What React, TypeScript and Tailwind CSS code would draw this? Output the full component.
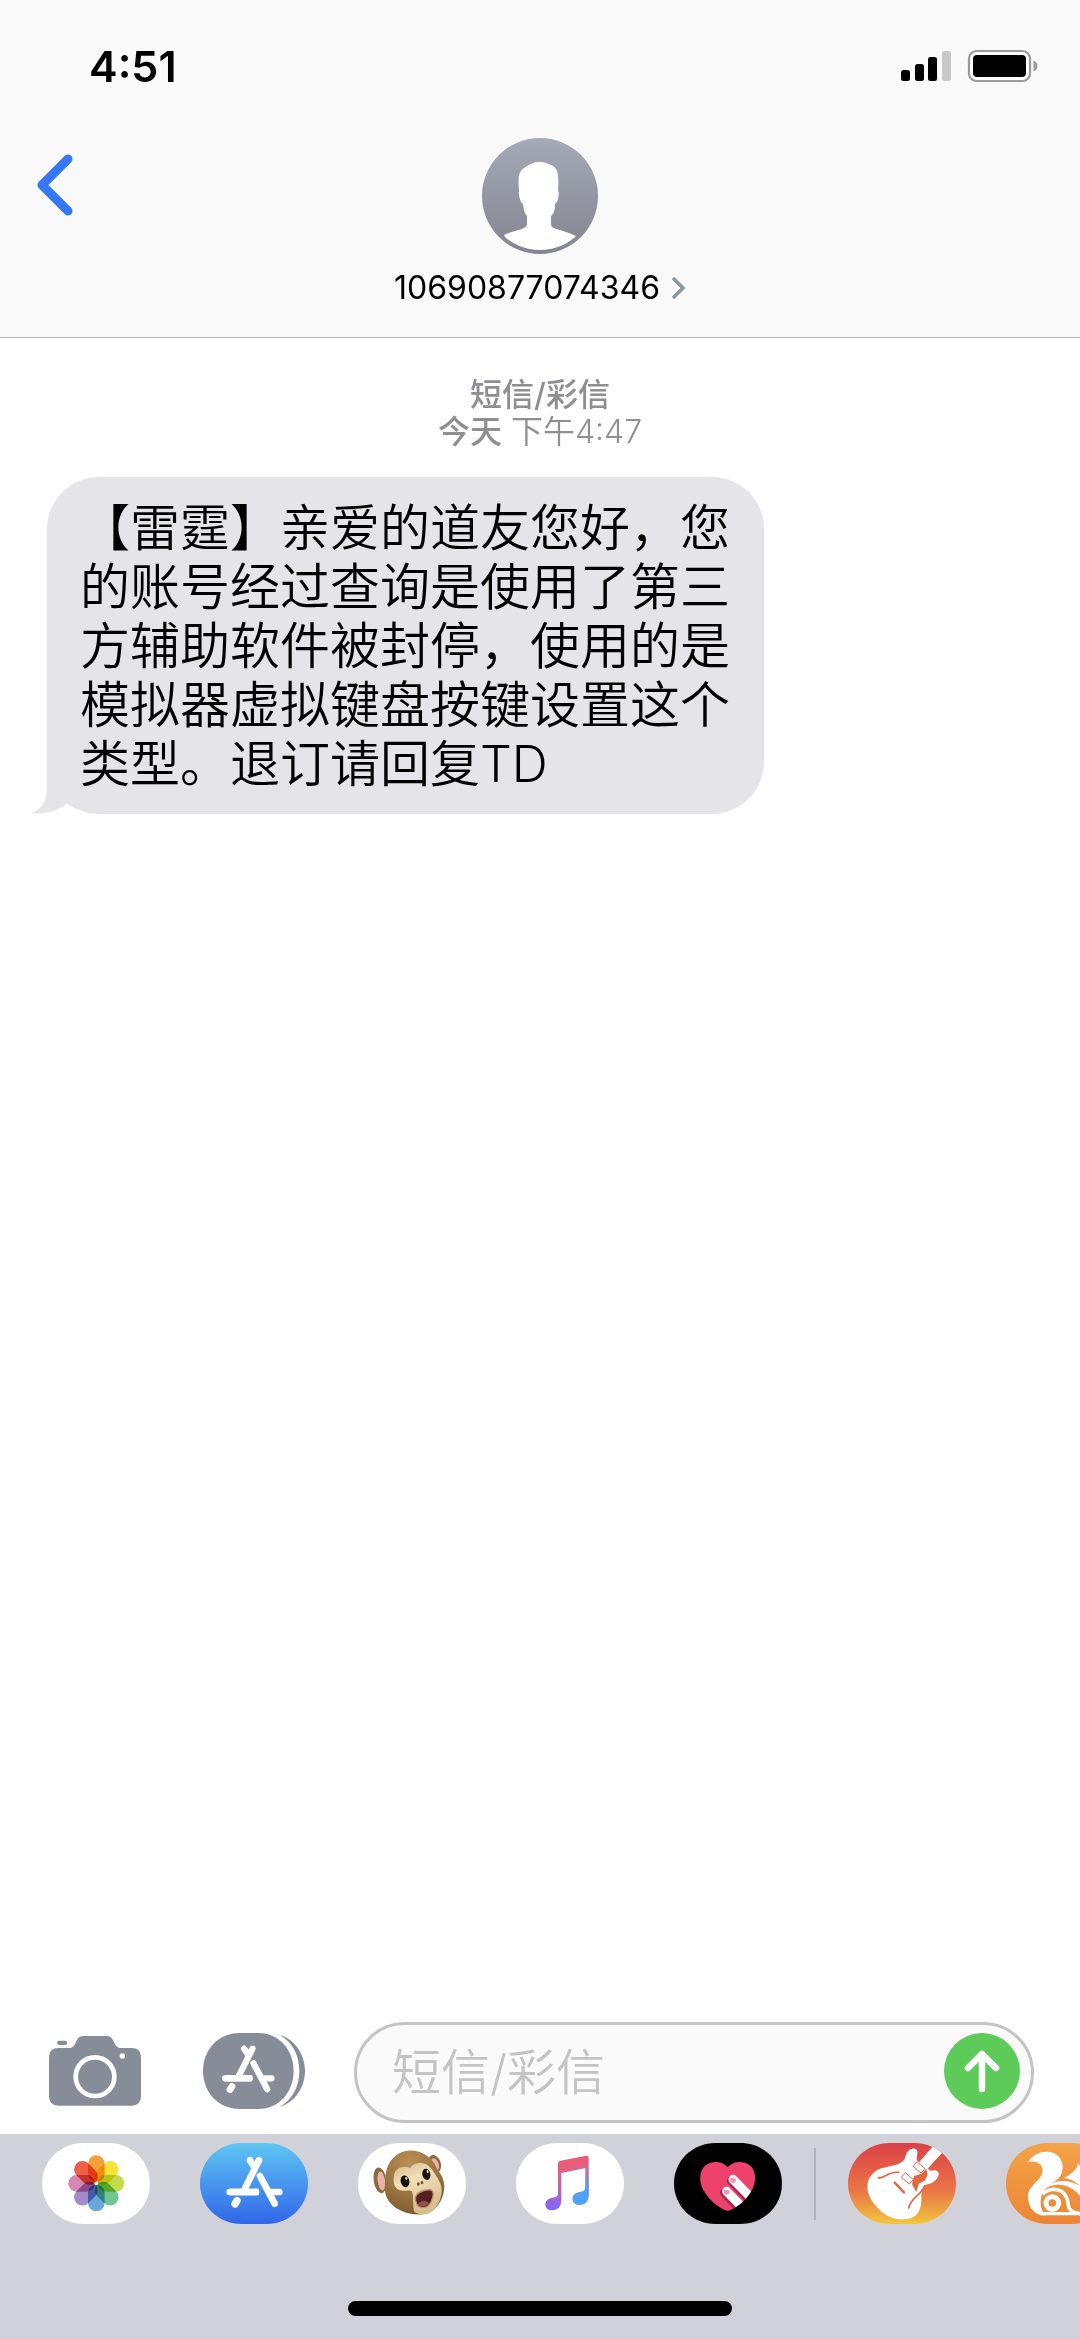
import type { ReactNode } from "react";

const MESSAGE =
  "【雷霆】亲爱的道友您好，您的账号经过查询是使用了第三方辅助软件被封停，使用的是模拟器虚拟键盘按键设置这个类型。退订请回复TD";

const PILL =
  "M126 0H198C270 0 324 54 324 121.5S270 243 198 243H126C54 243 0 189 0 121.5S54 0 126 0Z";

const HEART =
  "M161 73C176 55 206 52 226 66C250 84 247 122 230 148C214 174 190 192 170 201Q161 206 152 201C132 192 108 174 92 148C75 122 72 84 96 66C116 52 146 55 161 73Z";

const PETALS = [
  { angle: 0, color: "#f6a03c" },
  { angle: 45, color: "#f7e23a" },
  { angle: 90, color: "#c0dc4c" },
  { angle: 135, color: "#70c493" },
  { angle: 180, color: "#6aa6dc" },
  { angle: 225, color: "#a48bc8" },
  { angle: 270, color: "#d288b0" },
  { angle: 315, color: "#ee5f48" },
];

function StatusIcons() {
  return (
    <svg width="138" height="34" viewBox="0 0 138 34" aria-hidden="true">
      <rect x="1" y="21" width="9" height="11" rx="2.5" />
      <rect x="15" y="15" width="9" height="17" rx="2.5" />
      <rect x="28" y="8" width="9" height="24" rx="2.5" />
      <rect x="42" y="2" width="9" height="30" rx="2.5" fill="#c8c8c8" />
      <rect x="69" y="2" width="61" height="30" rx="7.5" fill="#fff" stroke="#999" strokeWidth="2.2" />
      <rect x="73" y="6" width="53" height="22" rx="4" />
      <path d="M133.500 11.500C136 12.500 137.500 14.500 137.500 17S136 21.500 133.500 22.500Z" fill="#999" />
    </svg>
  );
}

function Avatar() {
  return (
    <svg className="size-29" viewBox="0 0 116 116" aria-hidden="true">
      <defs>
        <linearGradient id="avatar" x2="0" y2="1">
          <stop stopColor="#a5a9b8" />
          <stop offset="1" stopColor="#83858e" />
        </linearGradient>
        <clipPath id="avatarClip">
          <circle cx="58" cy="58" r="54" />
        </clipPath>
      </defs>
      <circle cx="58" cy="58" r="58" fill="url(#avatar)" />
      <path
        clipPath="url(#avatarClip)"
        fill="#fff"
        d="M57 24C63 24 67 26 71 28C76 31 77 38 76 53C78 54 76 65 73 66C73 72 72 75 69 78V86C69 89 71 90 74 91C82 93 88 95 94 98L86 116H30L22 97C28 94 34 93 40 91C44 89 45 88 45 85V78C42 75 42 71 41 66C38 65 36 54 37 53C36 38 36 33 45 28C49 26 52 24 57 24Z"
      />
    </svg>
  );
}

function AppStoreMark() {
  return (
    <g fill="none" stroke="#fff" strokeWidth="20" strokeLinecap="round">
      <path d="M177 52L130 146" />
      <path d="M150 52L162 70" />
      <path d="M180 99L224 182" />
      <path d="M89 147H176" strokeLinecap="butt" />
      <path d="M89 147H168M214 147H238" />
      <path d="M111 173L105 183" strokeWidth="22" />
    </g>
  );
}

function CameraIcon() {
  return (
    <svg width="92" height="70" viewBox="0 0 276 210" fill="#868c98" aria-hidden="true">
      <path d="M28 36H58C74 36 78 24 83 14C87 4 93 0 104 0H170C182 0 188 4 193 14C198 24 202 36 218 36H248Q276 36 276 64V180Q276 209 248 209H28Q0 209 0 180V64Q0 36 28 36Z" />
      <rect x="25" y="14" width="29" height="13" rx="5" />
      <circle cx="138" cy="122" r="58" fill="none" stroke="#fff" strokeWidth="14" />
      <circle cx="220" cy="60" r="8" fill="#fff" />
    </svg>
  );
}

function AppsIcon() {
  return (
    <svg width="102" height="76" viewBox="0 0 304 226" fill="#868c98" aria-hidden="true">
      <path d="M110 0H166C226 0 270 50 270 113S226 226 166 226H110C45 226 0 176 0 113S45 0 110 0Z" />
      <path d="M230 6C275 20 304 65 304 113S275 205 230 220C268 195 287 160 287 113S268 30 230 6Z" />
      <g transform="translate(-17 -2) scale(.93)">
        <AppStoreMark />
      </g>
    </svg>
  );
}

function Photos() {
  return (
    <>
      <path d={PILL} fill="#fff" />
      <g transform="translate(163 121)">
        {PETALS.map((petal) => (
          <rect
            key={petal.angle}
            className="mix-blend-multiply"
            x="-25"
            y="-84"
            width="50"
            height="80"
            rx="25"
            fill={petal.color}
            transform={`rotate(${petal.angle})`}
          />
        ))}
        <circle r="5" fill="#fff" />
      </g>
    </>
  );
}

function AppStore() {
  return (
    <>
      <defs>
        <linearGradient id="store" x2="0" y2="1">
          <stop stopColor="#5fc6f4" />
          <stop offset="1" stopColor="#3166e8" />
        </linearGradient>
      </defs>
      <path d={PILL} fill="url(#store)" />
      <AppStoreMark />
    </>
  );
}

function Animoji() {
  return (
    <>
      <defs>
        <radialGradient id="fur" cx=".42" cy=".2" r=".85">
          <stop stopColor="#b98f55" />
          <stop offset=".6" stopColor="#97713f" />
          <stop offset="1" stopColor="#7b5a33" />
        </radialGradient>
        <linearGradient id="face" x2=".4" y2="1">
          <stop stopColor="#d3b787" />
          <stop offset=".4" stopColor="#f1dfba" />
          <stop offset="1" stopColor="#d8bd8e" />
        </linearGradient>
      </defs>
      <path d={PILL} fill="#fff" />
      <ellipse cx="66" cy="112" rx="19" ry="39" fill="#8b6a3e" transform="rotate(-8 66 112)" />
      <ellipse cx="70" cy="114" rx="11" ry="29" fill="#e9b1a8" transform="rotate(-8 70 114)" />
      <ellipse cx="230" cy="62" rx="18" ry="27" fill="#8b6a3e" transform="rotate(-20 230 62)" />
      <ellipse cx="231" cy="64" rx="11" ry="19" fill="#e9b1a8" transform="rotate(-20 231 64)" />
      <path
        fill="url(#fur)"
        d="M150 23C190 20 224 44 236 76C249 95 258 106 259 130C258 162 244 190 222 204C205 216 180 216 158 212C130 208 105 193 91 172C78 152 80 132 82 108C82 62 110 27 150 23Z"
      />
      <path
        fill="url(#face)"
        d="M108 98C110 76 134 65 156 75C166 60 194 54 211 68C228 84 238 102 246 119C259 144 246 190 218 207C204 217 184 216 170 207C162 192 169 167 162 145C152 137 130 151 116 136C106 126 106 111 108 98Z"
      />
      <ellipse cx="141" cy="115" rx="13" ry="18" fill="#15120f" transform="rotate(-12 141 115)" />
      <ellipse cx="205" cy="94" rx="12" ry="17" fill="#15120f" transform="rotate(-12 205 94)" />
      <ellipse cx="145" cy="106" rx="3" ry="5" fill="#e2e2e2" />
      <ellipse cx="209" cy="86" rx="3" ry="5" fill="#e2e2e2" />
      <ellipse cx="181" cy="123" rx="4" ry="5" fill="#6d4b2d" />
      <ellipse cx="192" cy="119" rx="4" ry="5" fill="#6d4b2d" />
      <path
        fill="#55211f"
        stroke="#b98f62"
        strokeWidth="4"
        d="M173 161C179 146 208 137 221 142C230 149 224 176 211 188C199 197 180 194 176 182C173 175 171 168 173 161Z"
      />
      <path fill="#8d5154" d="M180 184C184 172 205 168 213 181C204 192 188 194 180 184Z" />
    </>
  );
}

function Music() {
  const note =
    "M126 62Q126 55 133 53L211 38Q218 37 218 44V155C218 175 207 184 193 185C178 186 170 178 170 167C170 155 180 150 192 147C204 145 208 143 208 132V75L136 90V172C136 192 125 201 110 202C95 203 88 194 88 184C88 172 98 166 110 164C122 162 126 160 126 150Z";
  return (
    <>
      <defs>
        <linearGradient id="noteBase" x2="0" y2="1">
          <stop stopColor="#ee5c74" />
          <stop offset=".3" stopColor="#e2607f" />
          <stop offset="1" stopColor="#7d68ff" />
        </linearGradient>
        <linearGradient id="noteBlue" gradientUnits="userSpaceOnUse" x1="208" y1="176" x2="178" y2="66">
          <stop stopColor="#4ea2fb" />
          <stop offset=".25" stopColor="#4ea2fb" />
          <stop offset="1" stopColor="#4ea2fb" stopOpacity="0" />
        </linearGradient>
        <clipPath id="noteRight">
          <rect x="165" y="30" width="60" height="170" />
        </clipPath>
      </defs>
      <path d={PILL} fill="#fff" />
      <path d={note} fill="url(#noteBase)" />
      <path d={note} fill="url(#noteBlue)" clipPath="url(#noteRight)" />
    </>
  );
}

function DigitalTouch() {
  return (
    <>
      <defs>
        <clipPath id="heart">
          <path d={HEART} />
        </clipPath>
      </defs>
      <path d={PILL} fill="#000" />
      <path d={HEART} fill="#ee416c" />
      <g clipPath="url(#heart)" strokeLinecap="round" fill="none">
        <path d="M151 149L205 206M172 113L240 183" stroke="#a82b4d" strokeWidth="27" />
        <path d="M158 145L212 200M177 109L245 178" stroke="#fff" strokeWidth="27" />
      </g>
      <path d="M168 108C170 103 176 104 178 107C182 104 187 108 186 112C184 118 180 121 177 121C171 118 167 113 168 108Z" fill="#ee94b2" />
      <path d="M149 143C151 138 157 139 159 142C163 139 168 143 167 147C165 153 161 156 158 156C152 153 148 148 149 143Z" fill="#ee94b2" />
    </>
  );
}

function GarageBand() {
  return (
    <>
      <defs>
        <linearGradient id="garage" x2="0" y2="1">
          <stop stopColor="#dc4049" />
          <stop offset=".6" stopColor="#e97745" />
          <stop offset="1" stopColor="#f2c63e" />
        </linearGradient>
        <clipPath id="garagePill">
          <path d={PILL} />
        </clipPath>
      </defs>
      <path d={PILL} fill="url(#garage)" />
      <path
        clipPath="url(#garagePill)"
        fill="#fff"
        d="M193 17C204 15 210 22 208 32L206 44C206 50 208 55 214 57L256 8L284 28L240 76C242 84 248 84 258 82C270 82 275 90 271 99C266 113 250 122 238 124C224 128 222 142 220 155C222 185 216 212 196 222C178 232 150 232 126 222C96 208 60 170 58 135C57 105 75 85 100 76C130 68 160 66 170 48C174 36 176 20 193 17Z"
      />
      <path fill="#e2673f" d="M192 124L198 99L220 92L235 77L239 95L230 113L212 122L205 148Z" />
      <g fill="#fff" stroke="#e0654a" strokeWidth="3">
        <path d="M207 56L231 77L219 90L195 70Z" />
        <path d="M172 89L196 110L184 123L160 103Z" />
      </g>
      <g fill="none" stroke="#e0654a" strokeLinecap="round">
        <path d="M140 119L168 148" strokeWidth="7" />
        <path d="M91 104C108 109 118 84 152 88" strokeWidth="5" />
        <path d="M230 128C220 158 190 160 182 195" strokeWidth="5" />
      </g>
    </>
  );
}

function Squirrel() {
  return (
    <>
      <defs>
        <linearGradient id="squirrel" x2="0" y2="1">
          <stop stopColor="#f3a347" />
          <stop offset="1" stopColor="#ec8535" />
        </linearGradient>
      </defs>
      <path d={PILL} fill="url(#squirrel)" />
      <path
        fill="#fff"
        d="M66 56C82 34 102 26 122 26C152 26 172 48 170 76C168 98 158 108 140 120C116 136 104 152 104 176C104 196 110 206 120 217H108C80 212 64 185 66 155C70 125 108 112 110 84C110 62 92 52 66 56Z"
      />
      <path
        fill="#fff"
        d="M172 104C184 102 192 94 200 88L212 74L217 60L226 78C240 84 256 96 262 112C256 124 240 130 222 128L226 164C208 140 190 130 168 126C148 123 134 126 120 136C132 122 150 114 168 114C190 114 206 120 222 128C208 114 192 106 172 104Z"
      />
      <path d="M110 154C124 138 150 134 168 146C182 156 186 170 187 186C188 202 200 210 226 212" fill="none" stroke="#fff" strokeWidth="11" />
      <circle cx="139" cy="180" r="19" fill="none" stroke="#fff" strokeWidth="15" />
      <path d="M100 212H226" stroke="#fff" strokeWidth="10" />
    </>
  );
}

function DockApp({ label, children }: { label: string; children: ReactNode }) {
  return (
    <button type="button" aria-label={label} className="shrink-0">
      <svg className="block" width="108" height="81" viewBox="0 0 324 243" aria-hidden="true">
        {children}
      </svg>
    </button>
  );
}

function Header() {
  return (
    <header className="border-b border-[#b2b2b2] bg-[#f9f9f9]">
      <div className="flex h-33 items-center justify-between pr-[42px] pl-[89px]">
        <time className="text-[43px] leading-none font-semibold">4:51</time>
        <StatusIcons />
      </div>
      <div className="grid grid-cols-[1fr_auto_1fr] items-start px-8 pt-[6px] pb-[31px]">
        <button type="button" aria-label="返回" className="mt-4 w-12">
          <svg className="block" width="48" height="62" viewBox="0 0 48 62" aria-hidden="true">
            <path d="M36 5L10 31L36 57" fill="none" stroke="#3478f6" strokeWidth="9" strokeLinecap="round" strokeLinejoin="round" />
          </svg>
        </button>
        <button type="button" className="flex flex-col items-center gap-4">
          <Avatar />
          <span className="flex items-center gap-3 text-[32px] leading-9">
            10690877074346
            <svg width="14" height="22" viewBox="0 0 14 22" aria-hidden="true">
              <path d="M2 2L11 11L2 20" fill="none" stroke="#8e959d" strokeWidth="3.500" strokeLinecap="round" />
            </svg>
          </span>
        </button>
      </div>
    </header>
  );
}

function Conversation() {
  return (
    <main className="flex-1 px-[47px] pt-[38px]">
      <p className="text-center text-[32px] leading-[37px] text-[#8e8e93]">
        <span className="font-medium">短信/彩信</span>
        <br />
        <span className="font-medium">今天</span> <span className="font-[350]">下午4:47</span>
      </p>
      <div className="relative mt-[27px] w-fit max-w-[717px] rounded-[52px] bg-[#e5e4e9] px-[33px] pt-[22px] pb-5">
        <svg className="absolute bottom-0 -left-4" width="60" height="50" viewBox="0 0 60 50" aria-hidden="true">
          <path d="M16 0V24C16 38 10 46 0 49C14 51 26 47 36 40L60 50V0Z" fill="#e5e4e9" />
        </svg>
        <p className="relative text-[50px] leading-[59px] font-[350] break-all">{MESSAGE}</p>
      </div>
    </main>
  );
}

function Composer() {
  return (
    <form className="flex items-center pr-[46px] pb-[11px] pl-[49px]" onSubmit={(e) => e.preventDefault()}>
      <button type="button" aria-label="相机" className="mb-1">
        <CameraIcon />
      </button>
      <button type="button" aria-label="App" className="mb-1 ml-[62px]">
        <AppsIcon />
      </button>
      <div className="ml-[49px] flex h-[101px] min-w-0 flex-1 items-center rounded-full border-3 border-[#c4c4c6] bg-[#fafafa] pr-[11px] pl-[35px]">
        <input
          type="text"
          aria-label="短信/彩信"
          placeholder="短信/彩信"
          className="min-w-0 flex-1 text-[49px] leading-[60px] font-[350] outline-none placeholder:text-[#c4c4c6]"
        />
        <button type="submit" aria-label="发送" className="mb-1 rounded-full bg-[#5ccb5a]">
          <svg className="block" width="76" height="76" viewBox="0 0 76 76" aria-hidden="true">
            <path d="M38 21V56M24 35L38 21L52 35" fill="none" stroke="#fff" strokeWidth="6.500" strokeLinecap="round" strokeLinejoin="round" />
          </svg>
        </button>
      </div>
    </form>
  );
}

function Dock() {
  return (
    <footer className="flex flex-col items-center overflow-hidden bg-[#d1d2d9] pb-[23px]">
      <nav className="flex w-full items-center gap-[50px] overflow-hidden pt-[9px] pl-[42px]">
        <DockApp label="照片"><Photos /></DockApp>
        <DockApp label="App Store"><AppStore /></DockApp>
        <DockApp label="动话表情"><Animoji /></DockApp>
        <DockApp label="音乐"><Music /></DockApp>
        <div className="flex shrink-0 items-center gap-8">
          <DockApp label="Digital Touch"><DigitalTouch /></DockApp>
          <div className="h-18 w-[2px] bg-[#b2b3b8]" />
          <DockApp label="库乐队"><GarageBand /></DockApp>
        </div>
        <DockApp label="UC浏览器"><Squirrel /></DockApp>
      </nav>
      <div className="mt-[77px] h-[15px] w-96 rounded-full bg-black" />
    </footer>
  );
}

export default function App() {
  return (
    <div className="flex min-h-screen flex-col bg-white font-[Inter,'Noto_Sans_CJK_SC',sans-serif] text-black" lang="zh-CN">
      <Header />
      <Conversation />
      <Composer />
      <Dock />
    </div>
  );
}
